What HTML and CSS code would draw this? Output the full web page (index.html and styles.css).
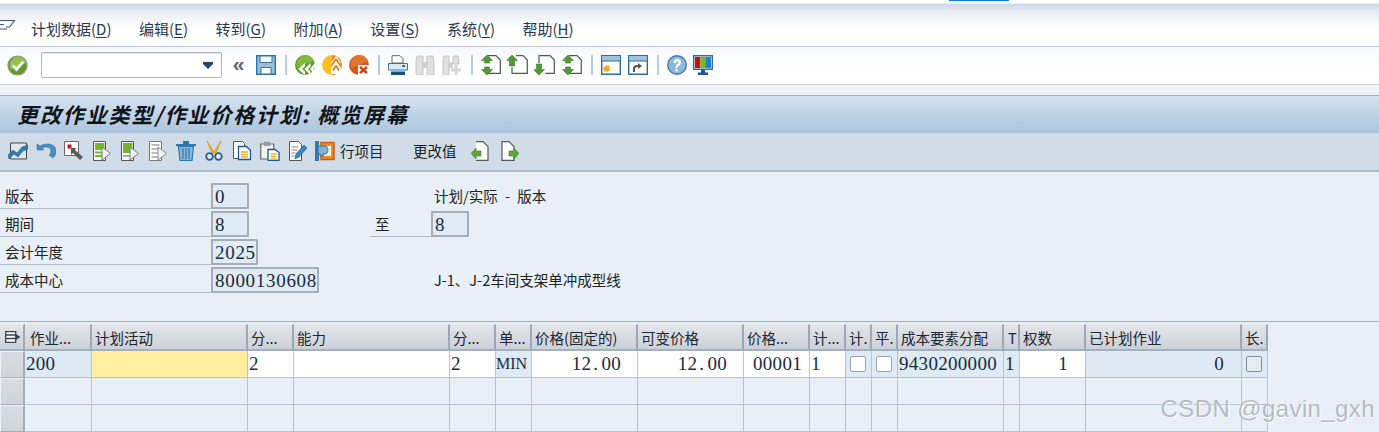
FILE: index.html
```html
<!DOCTYPE html>
<html lang="zh">
<head>
<meta charset="utf-8">
<title>更改作业类型/作业价格计划: 概览屏幕</title>
<link rel="stylesheet" href="styles.css">
</head>
<body>
<div class="page">
  <div class="topstrip"><span class="accent"></span></div>

  <nav class="menubar">
    <svg class="menuicon" width="15" height="13" viewBox="0 0 15 13"><path d="M0 1.500h7M0 5.500h4M0 10h7M7 1.500h7.500L9.500 8H6" fill="none" stroke="#44566e" stroke-width="1.200"/></svg>
    <div class="menuitems">
      <span>计划数据(<u>D</u>)</span><span>编辑(<u>E</u>)</span><span>转到(<u>G</u>)</span><span>附加(<u>A</u>)</span><span>设置(<u>S</u>)</span><span>系统(<u>Y</u>)</span><span>帮助(<u>H</u>)</span>
    </div>
  </nav>

  <div class="systool">
    <span class="btn"><svg width="21" height="21" viewBox="0 0 22 22"><circle cx="11" cy="11" r="10" fill="#5f9c2a" stroke="#8a9a80" stroke-width="1.200"/><path d="M11 1.500a9.500 9.500 0 0 1 9 7L4 15a9.500 9.500 0 0 1 7-13.500z" fill="#93c452"/><path d="M6 11l4 4 7-8" fill="none" stroke="#fff" stroke-width="3"/></svg></span>
    <div class="cmd"><svg class="caret" width="12" height="7" viewBox="0 0 12 7"><path d="M1 0h10v2L6 7 1 2z" fill="#22426e"/></svg></div>
    <span class="btn chev">«</span>
    <span class="btn"><svg width="20" height="20" viewBox="0 0 20 20"><path d="M.700.700h18.600v18.600H.700z" fill="#9cc0dc" stroke="#2f75a8" stroke-width="1.400"/><path d="M4 1h12v6.500H4z" fill="#f7fafd" stroke="#2f75a8"/><path d="M5 12.500h10V19H5z" fill="#fff" stroke="#2f75a8"/></svg></span>
    <i class="sep"></i>
    <span class="btn"><svg width="20" height="20" viewBox="0 0 20 20"><circle cx="10" cy="10" r="10" fill="#5f9c2a"/><path d="M10 0a10 10 0 0 1 9 6L2 13a10 10 0 0 1 8-13z" fill="#7eb83c"/><path d="M3 14l7-6v3.500L7 14l3 2.500V20zM9.500 14l6-6v3.500L13 14l2.500 2.500V20zM15 14l5-6v3.500L18 14l2 2.500V20z" fill="#fff"/></svg></span>
    <span class="btn"><svg width="20" height="20" viewBox="0 0 20 20"><circle cx="10" cy="10" r="10" fill="#fbbf24"/><path d="M10 0a10 10 0 0 1 10 10 10 10 0 0 1-10 10z" fill="#ef8a1e"/><path d="M14 1l5 7h-2.500v1.500L19 13v6H9v-6l2.500-3.500V8H9z" fill="#fff"/><path d="M14 4l3 4.500M14 4l-3 4.500M14 10.500l3 5M14 10.500l-3 5" stroke="#e8771c" stroke-width="1.700" fill="none"/></svg></span>
    <span class="btn"><svg width="20" height="20" viewBox="0 0 20 20"><circle cx="10" cy="10" r="10" fill="#d2591c"/><path d="M10 0a10 10 0 0 1 9 6L2 13a10 10 0 0 1 8-13z" fill="#e4752c"/><path d="M9 10h11v10H9z" fill="#fff"/><path d="M11 12l7 6M18 12l-7 6" stroke="#c9401a" stroke-width="2.400"/></svg></span>
    <i class="sep"></i>
    <span class="btn"><svg width="20" height="20" viewBox="0 0 20 20"><path d="M4 .700h8l3 3V8H4z" fill="#fff" stroke="#666"/><path d="M.500 8.500h19v6.500H.500z" fill="#dce9f3" stroke="#2f75a8"/><path d="M14 10h3v2h-3z" fill="#2f75a8"/><path d="M3 16.500h14V20H3z" fill="#174f7d"/></svg></span>
    <span class="btn"><svg width="20" height="20" viewBox="0 0 20 20"><path d="M2 1h6v19H1V7zM12 1h6l1 6v13h-7z" fill="#e0e0e0" stroke="#c4c4c4"/><path d="M8 7h4v6H8z" fill="#cfcfcf"/></svg></span>
    <span class="btn"><svg width="20" height="20" viewBox="0 0 20 20"><path d="M2 1h5v19H1V7zM11 1h5l1 6v2h-6z" fill="#e0e0e0" stroke="#c4c4c4"/><path d="M7 7h4v6H7z" fill="#cfcfcf"/><path d="M14 10v10M9 15h10" stroke="#d6d6d6" stroke-width="3"/></svg></span>
    <i class="sep"></i>
    <span class="btn"><svg width="21" height="20" viewBox="0 0 21 20"><path d="M8 .700h8l4.300 4.300v13.300H8" fill="#fff" stroke="#555" stroke-width="1.200"/><path d="M7 0l5.500 5.500H9.500V8h-5V5.500H1.500zM7 20l5.500-5.500H9.500V12h-5v2.500H1.500z" fill="#4f9a36" stroke="#3a7d2a" stroke-width=".6"/></svg></span>
    <span class="btn"><svg width="21" height="20" viewBox="0 0 21 20"><path d="M9 .700h7l4.300 4.300v13.300H5v-6" fill="#fff" stroke="#555" stroke-width="1.200"/><path d="M5 0l5.500 5.500H7.500V11h-5V5.500H-.500z" fill="#4f9a36" stroke="#3a7d2a" stroke-width=".6"/></svg></span>
    <span class="btn"><svg width="21" height="20" viewBox="0 0 21 20"><path d="M5 8V.700h11l4.300 4.300v13.300h-9" fill="#fff" stroke="#555" stroke-width="1.200"/><path d="M5 20l5.500-5.500H7.500V9h-5v5.500H-.500z" fill="#4f9a36" stroke="#3a7d2a" stroke-width=".6"/></svg></span>
    <span class="btn"><svg width="21" height="20" viewBox="0 0 21 20"><path d="M8 .700h8l4.300 4.300v13.300H8" fill="#fff" stroke="#555" stroke-width="1.200"/><path d="M7 0l5.500 5.500H9.500V8h-5V5.500H1.500zM7 20l5.500-5.500H9.500V12h-5v2.500H1.500z" fill="#4f9a36" stroke="#3a7d2a" stroke-width=".6"/></svg></span>
    <i class="sep"></i>
    <span class="btn"><svg width="20" height="20" viewBox="0 0 20 20"><path d="M.700.700h18.600v18.600H.700z" fill="#fff" stroke="#2b6d9e" stroke-width="1.400"/><path d="M1 1h18v5H1z" fill="#9fc2de"/><path d="M1 6h18" stroke="#2b6d9e"/><path d="M5 9l1 2 2-1v2l2 1-2 1 1 2H7l-1 2-1-2-2 1v-2l-2-1 2-1-1-2 2 1z" fill="#f9a825"/></svg></span>
    <span class="btn"><svg width="20" height="20" viewBox="0 0 20 20"><path d="M.700.700h18.600v18.600H.700z" fill="#fff" stroke="#2b6d9e" stroke-width="1.400"/><path d="M1 1h18v5H1z" fill="#9fc2de"/><path d="M1 6h18" stroke="#2b6d9e"/><path d="M6 17v-3a3 3 0 0 1 3-3h2" fill="none" stroke="#555" stroke-width="2"/><path d="M10 8l4 3-4 3z" fill="#555"/></svg></span>
    <i class="sep"></i>
    <span class="btn"><svg width="20" height="20" viewBox="0 0 20 20"><circle cx="10" cy="10" r="9.300" fill="#8fb8d8" stroke="#3f7fae" stroke-width="1.400"/><path d="M6.500 8c0-6 8-5 7.500-.500 0 3-3.500 3-3.500 5.500H8.500c0-4 3-4 3-5.500 0-1.500-2.500-1.500-2.500.500zM8.500 14h2.200v2.500H8.500z" fill="#fff"/></svg></span>
    <span class="btn narrow"><svg width="20" height="20" viewBox="0 0 20 20"><path d="M.700.700h18.600v13.600H.700z" fill="#fff" stroke="#2b6d9e" stroke-width="1.400"/><path d="M2 2h5.300v11H2z" fill="#c80f0f"/><path d="M7.300 2h5v11h-5z" fill="#7db52e"/><path d="M12.300 2H18v11h-5.700z" fill="#1b82c5"/><path d="M8 15h4v2.500h3V20H5v-2.500h3z" fill="#1d5a88"/></svg></span>
  </div>

  <div class="strip"></div>

  <h1 class="title">更改作业类型/作业价格计划: 概览屏幕</h1>

  <div class="apptool">
    <span class="abtn"><svg width="20" height="18" viewBox="0 0 20 18"><path d="M2.500 1h16v16h-16z" fill="#dfe8ef" stroke="#444"/><path d="M0 13l5-5 4 3 5-6 6-2v4l-5 2-5 6-4-3-5 5z" fill="#2f7cb0" stroke="#1f5d8a" stroke-width=".5"/></svg></span>
    <span class="abtn"><svg width="20" height="18" viewBox="0 0 20 18"><path d="M1 2v6h7L6 6c4-2 9-1 9 3 0 2-1 3-2 4l4 3c2-2 3-4 3-7 0-7-9-9-16-5z" fill="#4d8fc0" stroke="#2a6b9c" stroke-width=".6"/></svg></span>
    <span class="abtn"><svg width="20" height="20" viewBox="0 0 20 20"><path d="M.500.500h14v14H.500z" fill="#fff" stroke="#666"/><path d="M3.500 3.500h4v4h-4z" fill="#d00f0f"/><path d="M7 7h5l-1 2 8 7-3 3-7-7-2 2z" fill="#5a5a5a"/></svg></span>
    <span class="abtn"><svg width="18" height="20" viewBox="0 0 18 20"><path d="M.500.500h12v19H.500z" fill="#fff" stroke="#555"/><path d="M2 2h9.500v7H2z" fill="#78b42e"/><path d="M2 10.500h7v2H2zM2 14h7v2H2z" fill="#78b42e"/><path d="M9 6l8.500 6.500L9 19z" fill="#f3f3f3" stroke="#777"/></svg></span>
    <span class="abtn"><svg width="18" height="20" viewBox="0 0 18 20"><path d="M.500.500h12v19H.500z" fill="#fff" stroke="#555"/><path d="M2 2h9.500v10H2z" fill="#78b42e"/><path d="M2 14h7v2H2z" fill="#aaa"/><path d="M9 6l8.500 6.500L9 19z" fill="#f3f3f3" stroke="#777"/></svg></span>
    <span class="abtn"><svg width="18" height="20" viewBox="0 0 18 20"><path d="M.500.500h12v19H.500z" fill="#fff" stroke="#777"/><path d="M2.500 3h8v2h-8zM2.500 7h8v2h-8zM2.500 11h6v2h-6zM2.500 15h6v2h-6z" fill="#bbb"/><path d="M9 6l8.500 6.500L9 19z" fill="#f3f3f3" stroke="#888"/></svg></span>
    <span class="abtn"><svg width="20" height="21" viewBox="0 0 20 21"><path d="M0 4h20v2H0zM7 1h6v3H7z" fill="#2f78ad"/><path d="M2.500 6.500h15L16 20.500H4z" fill="#8cb6d6" stroke="#2f78ad" stroke-width="1.200"/><path d="M7 8v11M10 8v11M13 8v11" stroke="#2f78ad" stroke-width="1.200"/></svg></span>
    <span class="abtn"><svg width="18" height="20" viewBox="0 0 18 20"><path d="M2 0l7 11 7-11-5 12H7z" fill="#f0b428" stroke="#d88e10" stroke-width=".7"/><circle cx="4.500" cy="15.500" r="3.300" fill="#e7f0f7" stroke="#235f95" stroke-width="1.800"/><circle cx="13.500" cy="15.500" r="3.300" fill="#e7f0f7" stroke="#235f95" stroke-width="1.800"/></svg></span>
    <span class="abtn"><svg width="19" height="20" viewBox="0 0 19 20"><path d="M.500.500h9l2 2v15h-11z" fill="#fff" stroke="#555"/><path d="M5.500 5.500h8l4 4v9h-12z" fill="#fff" stroke="#1a5a8c" stroke-width="1.300"/><path d="M8 11h7M8 13.500h7M8 16h7" stroke="#f0b428" stroke-width="1.500"/></svg></span>
    <span class="abtn"><svg width="20" height="20" viewBox="0 0 20 20"><path d="M.700 3h13v15H.700z" fill="#eef2f5" stroke="#666" stroke-width="1.200"/><path d="M4 .700h6V5H4z" fill="#999"/><path d="M8 8.500h7l4 3v8H8z" fill="#fff" stroke="#1a5a8c" stroke-width="1.300"/><path d="M10.500 13h6M10.500 15.500h6M10.500 18h6" stroke="#f0b428" stroke-width="1.400"/></svg></span>
    <span class="abtn"><svg width="19" height="20" viewBox="0 0 19 20"><path d="M.500.500h9l3 3v16H.500z" fill="#fff" stroke="#555"/><path d="M2.500 6h7M2.500 9h6M2.500 12h4M2.500 15h3" stroke="#888" stroke-width="1.200"/><path d="M6 18l1-5 8-9 3 3-8 9z" fill="#3b86bd" stroke="#1f5f92" stroke-width=".7"/></svg></span>
    <span class="abtn"><svg width="20" height="20" viewBox="0 0 20 20"><path d="M6 1.500h13v17H6z" fill="#e98b2a" stroke="#d05c10" stroke-width="1.500"/><path d="M9 5h7v10H9z" fill="#f8f2e3"/><path d="M0 0h4v20H0z" fill="#2f7cb0"/><path d="M3 5h7c4 0 4 8 0 8H8v2H5v-2H3z" fill="#7fb1d4" stroke="#235f95" stroke-width=".8"/></svg><em class="btxt">行项目</em></span>
    <span class="atext">更改值</span>
    <span class="abtn next"><svg width="18" height="20" viewBox="0 0 18 20"><path d="M5 .700h7l5 5v13.600H5" fill="#fff" stroke="#555" stroke-width="1.200"/><path d="M5 7v3h5v5H5v3L0 12.500z" fill="#5aa83c" stroke="#3a7d2a" stroke-width=".6"/></svg></span>
    <span class="abtn last"><svg width="18" height="20" viewBox="0 0 18 20"><path d="M1 19.300V.700h7l5 5v13.600z" fill="#fff" stroke="#555" stroke-width="1.200"/><path d="M13 7v3H8v5h5v3l5-5.500z" fill="#5aa83c" stroke="#3a7d2a" stroke-width=".6"/></svg></span>
  </div>

  <main class="content">
    <section class="form">
      <div class="row">
        <label class="lbl">版本</label><span class="field f-s">0</span>
        <span class="desc wide">计划/实际 - 版本</span>
      </div>
      <div class="row">
        <label class="lbl">期间</label><span class="field f-s">8</span>
        <label class="lbl to">至</label><span class="field f-s">8</span>
      </div>
      <div class="row">
        <label class="lbl">会计年度</label><span class="field f-m">2025</span>
      </div>
      <div class="row">
        <label class="lbl">成本中心</label><span class="field f-l">8000130608</span>
        <span class="desc after-l">J-1、J-2车间支架单冲成型线</span>
      </div>
    </section>

    <section class="grid">
      <div class="hd sel"><svg width="16" height="12" viewBox="0 0 16 12"><path d="M.700.700h10v10.600H.700zM1 4h10M1 7.500h10" fill="#fff" stroke="#3a4250" stroke-width="1.300"/><path d="M11 3l4.500 3-4.500 3z" fill="#3a4250"/></svg></div>
      <div class="hd first">作业...</div><div class="hd">计划活动</div><div class="hd">分...</div><div class="hd">能力</div><div class="hd">分...</div><div class="hd">单...</div><div class="hd">价格(固定的)</div><div class="hd">可变价格</div><div class="hd">价格...</div><div class="hd">计...</div><div class="hd">计.</div><div class="hd">平.</div><div class="hd">成本要素分配</div><div class="hd tight">T</div><div class="hd">权数</div><div class="hd">已计划作业</div><div class="hd">长.</div>

      <div class="c rs"></div>
      <div class="c ro">200</div><div class="c yellow"></div><div class="c wh">2</div><div class="c wh"></div><div class="c wh">2</div>
      <div class="c ro min">MIN</div>
      <div class="c wh num r16">12<span class="dot">.</span>00</div>
      <div class="c wh num r16">12<span class="dot">.</span>00</div>
      <div class="c wh num r8">00001</div>
      <div class="c wh">1</div>
      <div class="c ro ck"><span class="box"></span></div>
      <div class="c ro ck"><span class="box"></span></div>
      <div class="c ro">9430200000</div>
      <div class="c ro">1</div>
      <div class="c wh num r17">1</div>
      <div class="c ro num r17">0</div>
      <div class="c ro ck"><span class="box off"></span></div>

      <div class="c rs"></div><div class="c"></div><div class="c"></div><div class="c"></div><div class="c"></div><div class="c"></div><div class="c"></div><div class="c"></div><div class="c"></div><div class="c"></div><div class="c"></div><div class="c"></div><div class="c"></div><div class="c"></div><div class="c"></div><div class="c"></div><div class="c"></div><div class="c"></div>
      <div class="c rs"></div><div class="c"></div><div class="c"></div><div class="c"></div><div class="c"></div><div class="c"></div><div class="c"></div><div class="c"></div><div class="c"></div><div class="c"></div><div class="c"></div><div class="c"></div><div class="c"></div><div class="c"></div><div class="c"></div><div class="c"></div><div class="c"></div><div class="c"></div>
    </section>
    <div class="wm">CSDN @gavin_gxh</div>
  </main>
</div>
</body>
</html>
```
FILE: styles.css
```css
* { box-sizing: border-box; }
html, body { margin: 0; padding: 0; }
body { background: #e8eff7; font-family: "Noto Sans CJK SC", "Noto Sans", sans-serif; color: #1c2533; }
.page { width: 1379px; height: 432px; overflow: hidden; display: flex; flex-direction: column; position: relative; }

.topstrip { height: 4px; background: #fdfdfe; border-bottom: 1px solid #eef1f6; }
.accent { display: block; width: 60px; height: 1px; margin-left: 949px; background: #0a7ee0; }

.menubar { height: 43px; display: flex; padding-top: 7px; background: linear-gradient(#cdd7e7 0, #e9edf4 8px, #fff 24px, #fff 100%); border-bottom: 1px solid #c5c9d3; position: relative; }
.menuicon { margin-top: 8px; flex: none; }
.menuitems { display: flex; gap: 27.500px; margin-left: 16px; font-size: 15px; line-height: 36px; color: #2a3750; }
.menuitems u { text-underline-offset: 2px; }

.systool { height: 38px; display: flex; align-items: center; padding-left: 4px; background: linear-gradient(#f6f8fc, #fff 60%); border-bottom: 1px solid #ccd0da; }
.btn { width: 27px; height: 24px; display: flex; align-items: center; justify-content: center; flex: none; }
.btn.narrow { margin-left: -1px; }
.cmd { width: 181px; height: 26px; margin-left: 10px; margin-right: 3px; background: #fff; border: 1px solid #b3b7bd; border-radius: 2px; display: flex; align-items: center; justify-content: flex-end; padding-right: 7px; box-shadow: inset 0 1px 1px #e4e6ea; flex: none; }
.chev { font-family: "Liberation Sans", sans-serif; font-size: 21px; color: #5f6570; font-weight: bold; line-height: 20px; padding-bottom: 3px; }
.sep { width: 2px; height: 20px; margin: 0 4px 0 6px; background: #b5cbdf; flex: none; }

.strip { height: 11px; background: linear-gradient(#f4f6fa, #edf0f6); border-bottom: 1px solid #a7acbd; }

.title { margin: 0; height: 38px; padding: 1px 0 0 17px; font-size: 21px; font-weight: 700; font-style: italic; line-height: 34px; letter-spacing: 1.900px; color: #10151c; background: linear-gradient(#d6e3f0, #abc4dc); white-space: nowrap; }

.apptool { height: 39px; display: flex; align-items: center; padding: 0 0 2px 4px; background: #d0dde9; border-bottom: 2px solid #acbccd; }
.abtn { min-width: 28px; height: 24px; display: flex; align-items: center; justify-content: center; flex: none; }
.abtn em { font-style: normal; }
.btxt { font-size: 14.500px; margin-left: 5px; color: #1a1f26; width: 44px; white-space: nowrap; }
.abtn:nth-child(12) { justify-content: flex-start; padding-left: 3px; }
.atext { font-size: 14.500px; margin-left: 29px; color: #1a1f26; width: 44px; white-space: nowrap; }
.abtn.next { margin-left: 9px; }
.abtn.last { margin-left: 2px; }

.content { flex: 1; background: #e8eff7; }

.form { display: flex; flex-direction: column; gap: 2px; padding-top: 11px; height: 150px; border-bottom: 1px solid #8db7dc; }
.row { display: flex; height: 26px; }
.lbl { width: 211px; height: 26px; padding: 0 0 0 5px; font-size: 14.500px; line-height: 25px; border-bottom: 1px solid #b5bec8; color: #222; flex: none; }
.lbl.to { width: 61px; margin-left: 121px; padding-left: 5px; }
.field { height: 26px; padding-left: 2px; font-family: "Liberation Serif", serif; font-size: 19px; line-height: 23px; letter-spacing: .7px; color: #1b2a44; background: #dfebf5; border: 2px solid #a7adb4; border-radius: 1px; flex: none; }
.f-s { width: 38px; }
.f-m { width: 47px; }
.f-l { width: 108px; }
.desc { margin-left: 185px; font-size: 14.500px; line-height: 26px; color: #222; white-space: nowrap; }
.desc.wide { word-spacing: 4px; }
.after-l { margin-left: 115px; line-height: 25px; }

.grid { display: grid; margin-top: 2px; grid-template-columns: 25px 67px 156px 46px 156px 46px 36px 106px 106px 66px 36px 26px 26px 106px 16px 66px 156px 26px; grid-template-rows: 27px 27px 27px 27px; width: 1268px; }
.hd { padding-left: 3px; font-size: 14.500px; line-height: 25px; white-space: nowrap; overflow: hidden; color: #20262f; background: linear-gradient(#e3e5e9, #ccd1d9); border-right: 2px solid #9fa7b2; border-bottom: 2px solid #a3b0bf; border-top: 1px solid #e8eaee; }
.hd.sel { padding: 0 0 0 5px; display: flex; align-items: center; }
.hd.first { padding-left: 5px; }
.hd.tight { padding-left: 4px; }
.c { border-right: 1px solid #bac3d1; border-bottom: 1px solid #bac3d1; padding-left: 1px; font-family: "Liberation Serif", serif; font-size: 19px; line-height: 26px; letter-spacing: .3px; color: #1b2a44; white-space: nowrap; overflow: hidden; }
.rs { background: linear-gradient(#d9dde3, #cfd4db); border: 1px solid #eef1f5; border-right: 2px solid #a4acb7; border-bottom: 1px solid #a4acb7; }
.ro { background: #deeaf4; }
.wh { background: #fff; }
.yellow { background: #ffef9e; }
.min { font-size: 16px; letter-spacing: 0; padding-left: 0; }
.num { text-align: right; }
.r16 { padding-right: 16px; }
.r17 { padding-right: 17px; }
.r8 { padding-right: 7px; }
.dot { padding: 0 3px 0 2px; }
.ck { display: flex; align-items: flex-start; padding: 5px 0 0 4px; }
.box { display: block; width: 16px; height: 16px; background: #fff; border: 1px solid #9aa1aa; border-radius: 2px; }
.box.off { background: #e4ebf2; border-color: #858c95; }

.wm { position: absolute; right: 4px; bottom: 9px; font-family: "Liberation Sans", sans-serif; font-size: 24px; line-height: 28px; letter-spacing: .4px; color: #b6bbc2; text-shadow: 1px 1px 1px #fff; white-space: nowrap; }
```
